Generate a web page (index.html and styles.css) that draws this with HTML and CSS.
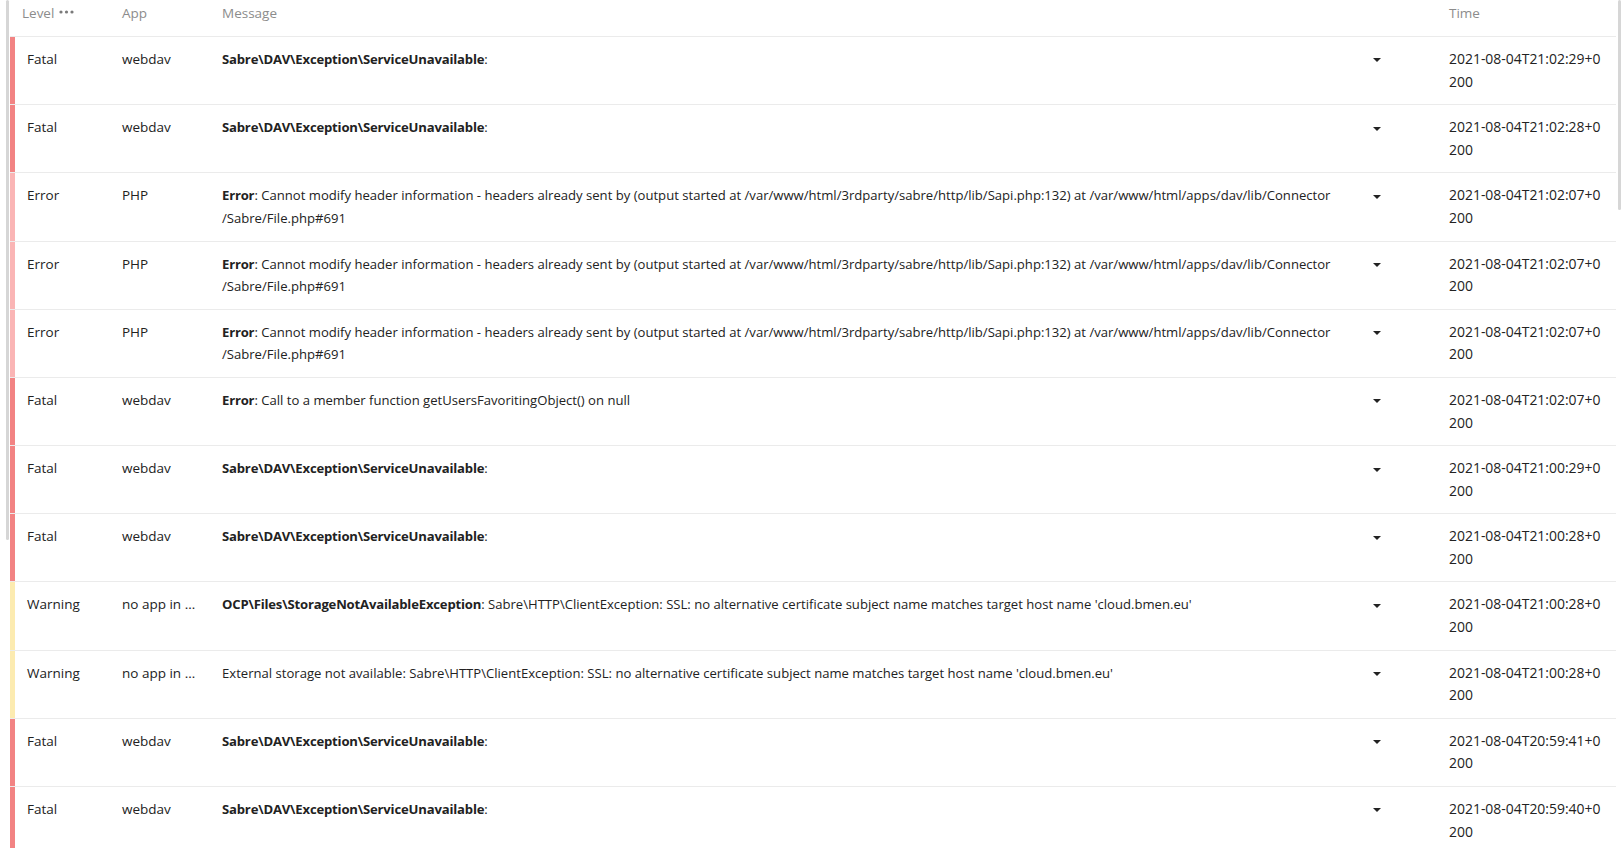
FILE: index.html
```html
<!doctype html>
<html>
<head>
    <meta charset="utf-8">
    <title>Logging</title>
    <link rel="stylesheet" href="styles.css">
</head>

<body>
<div class="page">
    <div class="gutter gutter-left"><div class="thumb thumb-left"></div></div>
    <div class="log">
        <div class="log-row log-head">
            <div class="cell cell-level">Level <svg class="dots" width="15" height="4" viewBox="0 0 15 4"><circle cx="2" cy="2" r="1.6"/><circle cx="7.5" cy="2" r="1.6"/><circle cx="13" cy="2" r="1.6"/></svg></div>
            <div class="cell cell-app">App</div>
            <div class="cell cell-msg">Message</div>
            <div class="cell cell-toggle"></div>
            <div class="cell cell-time">Time</div>
        </div>

        <div class="log-row level-fatal">
            <div class="cell cell-level">Fatal</div>
            <div class="cell cell-app">webdav</div>
            <div class="cell cell-msg"><b>Sabre\DAV\Exception\ServiceUnavailable</b>:</div>
            <div class="cell cell-toggle"><span class="caret"></span></div>
            <div class="cell cell-time">2021-08-04T21:02:29+0200</div>
        </div>
        <div class="log-row level-fatal">
            <div class="cell cell-level">Fatal</div>
            <div class="cell cell-app">webdav</div>
            <div class="cell cell-msg"><b>Sabre\DAV\Exception\ServiceUnavailable</b>:</div>
            <div class="cell cell-toggle"><span class="caret"></span></div>
            <div class="cell cell-time">2021-08-04T21:02:28+0200</div>
        </div>
        <div class="log-row level-error">
            <div class="cell cell-level">Error</div>
            <div class="cell cell-app">PHP</div>
            <div class="cell cell-msg"><b>Error</b>: Cannot modify header information - headers already sent by (output started at /var/www/html/3rdparty/sabre/http/lib/Sapi.php:132) at /var/www/html/apps/dav/lib/Connector/Sabre/File.php#691</div>
            <div class="cell cell-toggle"><span class="caret"></span></div>
            <div class="cell cell-time">2021-08-04T21:02:07+0200</div>
        </div>
        <div class="log-row level-error">
            <div class="cell cell-level">Error</div>
            <div class="cell cell-app">PHP</div>
            <div class="cell cell-msg"><b>Error</b>: Cannot modify header information - headers already sent by (output started at /var/www/html/3rdparty/sabre/http/lib/Sapi.php:132) at /var/www/html/apps/dav/lib/Connector/Sabre/File.php#691</div>
            <div class="cell cell-toggle"><span class="caret"></span></div>
            <div class="cell cell-time">2021-08-04T21:02:07+0200</div>
        </div>
        <div class="log-row level-error">
            <div class="cell cell-level">Error</div>
            <div class="cell cell-app">PHP</div>
            <div class="cell cell-msg"><b>Error</b>: Cannot modify header information - headers already sent by (output started at /var/www/html/3rdparty/sabre/http/lib/Sapi.php:132) at /var/www/html/apps/dav/lib/Connector/Sabre/File.php#691</div>
            <div class="cell cell-toggle"><span class="caret"></span></div>
            <div class="cell cell-time">2021-08-04T21:02:07+0200</div>
        </div>
        <div class="log-row level-fatal">
            <div class="cell cell-level">Fatal</div>
            <div class="cell cell-app">webdav</div>
            <div class="cell cell-msg"><b>Error</b>: Call to a member function getUsersFavoritingObject() on null</div>
            <div class="cell cell-toggle"><span class="caret"></span></div>
            <div class="cell cell-time">2021-08-04T21:02:07+0200</div>
        </div>
        <div class="log-row level-fatal">
            <div class="cell cell-level">Fatal</div>
            <div class="cell cell-app">webdav</div>
            <div class="cell cell-msg"><b>Sabre\DAV\Exception\ServiceUnavailable</b>:</div>
            <div class="cell cell-toggle"><span class="caret"></span></div>
            <div class="cell cell-time">2021-08-04T21:00:29+0200</div>
        </div>
        <div class="log-row level-fatal">
            <div class="cell cell-level">Fatal</div>
            <div class="cell cell-app">webdav</div>
            <div class="cell cell-msg"><b>Sabre\DAV\Exception\ServiceUnavailable</b>:</div>
            <div class="cell cell-toggle"><span class="caret"></span></div>
            <div class="cell cell-time">2021-08-04T21:00:28+0200</div>
        </div>
        <div class="log-row level-warning">
            <div class="cell cell-level">Warning</div>
            <div class="cell cell-app">no app in context</div>
            <div class="cell cell-msg"><b>OCP\Files\StorageNotAvailableException</b>: Sabre\HTTP\ClientException: SSL: no alternative certificate subject name matches target host name 'cloud.bmen.eu'</div>
            <div class="cell cell-toggle"><span class="caret"></span></div>
            <div class="cell cell-time">2021-08-04T21:00:28+0200</div>
        </div>
        <div class="log-row level-warning">
            <div class="cell cell-level">Warning</div>
            <div class="cell cell-app">no app in context</div>
            <div class="cell cell-msg">External storage not available: Sabre\HTTP\ClientException: SSL: no alternative certificate subject name matches target host name 'cloud.bmen.eu'</div>
            <div class="cell cell-toggle"><span class="caret"></span></div>
            <div class="cell cell-time">2021-08-04T21:00:28+0200</div>
        </div>
        <div class="log-row level-fatal">
            <div class="cell cell-level">Fatal</div>
            <div class="cell cell-app">webdav</div>
            <div class="cell cell-msg"><b>Sabre\DAV\Exception\ServiceUnavailable</b>:</div>
            <div class="cell cell-toggle"><span class="caret"></span></div>
            <div class="cell cell-time">2021-08-04T20:59:41+0200</div>
        </div>
        <div class="log-row level-fatal">
            <div class="cell cell-level">Fatal</div>
            <div class="cell cell-app">webdav</div>
            <div class="cell cell-msg"><b>Sabre\DAV\Exception\ServiceUnavailable</b>:</div>
            <div class="cell cell-toggle"><span class="caret"></span></div>
            <div class="cell cell-time">2021-08-04T20:59:40+0200</div>
        </div>
    </div>
    <div class="gutter gutter-right"><div class="thumb thumb-right"></div></div>
</div>
</body>

</html>
```

FILE: styles.css
```css
html, body {height: 848px; overflow: hidden;}
body {font-family: 'Open Sans', 'Noto Sans', sans-serif; font-size: 13.5px; line-height: 22.6px; color: #222; background: #fff; margin: 0; padding: 0;}
.page {display: flex; flex-direction: row; height: 848px;}
.gutter-left {width: 10px; flex: none;}
.gutter-right {width: 6px; flex: none;}
.thumb {background: #d6d6d6; border-radius: 2px;}
.thumb-left {width: 3px; height: 540px; margin-left: 6px;}
.thumb-right {width: 3px; height: 210px; margin-left: 2px;}
.log {flex: 1; min-width: 0;}
.log-row {display: grid; grid-template-columns: 102px 100px 1fr 84px 177px; border-bottom: 1px solid #ebebeb;}
.cell {padding: 11px 10px; min-width: 0;}
.log-head {color: #8c8c8c;}
.log-head .cell {padding-top: 2px; padding-bottom: 11.4px;}
.cell-level {padding-left: 12px;}
.log-row:not(.log-head) .cell-level {border-left: 5px solid transparent;}
.level-fatal .cell-level {border-left-color: #f28383 !important;}
.level-error .cell-level {border-left-color: #fab5b5 !important;}
.level-warning .cell-level {border-left-color: #fcebb0 !important;}
.cell-app {white-space: nowrap; overflow: hidden; text-overflow: ellipsis; padding-right: 14px;}
.cell-msg {font-size: 13.1px; word-break: break-all; line-break: anywhere; padding-right: 21.5px;}
.log-head .cell-msg {font-size: 13.5px;}
.cell-msg b {font-weight: 700; letter-spacing: -0.18px;}
.cell-toggle {padding-left: 18px;}
.cell-time {font-size: 13.95px; word-break: break-all;}
.log-head .cell-time {font-size: 13.5px;}
.dots {fill: #7a7a7a; vertical-align: middle; margin-left: 1px; position: relative; top: -2px;}
.caret {display: inline-block; width: 0; height: 0; border-left: 4px solid transparent; border-right: 4px solid transparent; border-top: 4px solid #222; vertical-align: middle;}
```
